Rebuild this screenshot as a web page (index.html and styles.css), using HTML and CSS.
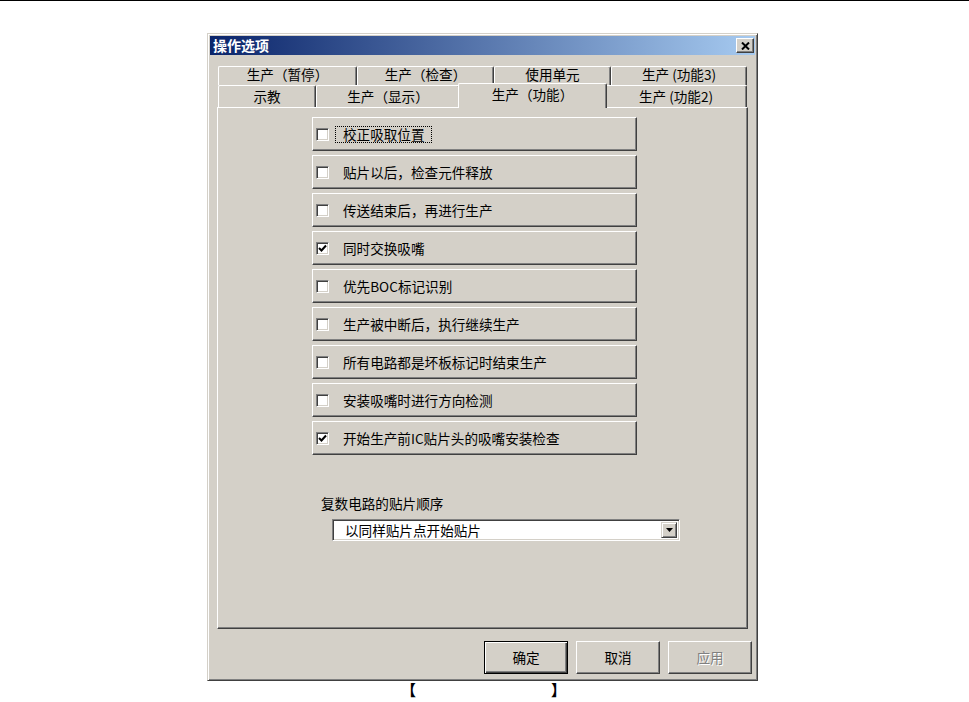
FILE: index.html
```html
<!DOCTYPE html>
<html>
<head>
    <meta charset="utf-8">
    <title>操作选项</title>
    <link rel="stylesheet" href="styles.css">
</head>
<body>
    <div class="top-rule"></div>

    <div class="dialog">
        <div class="titlebar">
            <span class="title">操作选项</span>
            <span class="close-btn">
                <svg width="9" height="8" viewBox="0 0 9 8"><path d="M1 0.5 L8 7.5 M8 0.5 L1 7.5" stroke="#000" stroke-width="2"/></svg>
            </span>
        </div>

        <div class="tabs">
            <div class="tab-row back">
                <div class="tab">生产（暂停）</div>
                <div class="tab">生产（检查）</div>
                <div class="tab">使用单元</div>
                <div class="tab">生产 (功能3)</div>
            </div>
            <div class="tab-row front">
                <div class="tab">示教</div>
                <div class="tab">生产（显示）</div>
                <div class="tab selected">生产（功能）</div>
                <div class="tab">生产 (功能2)</div>
            </div>
        </div>

        <div class="panel">
            <div class="options">
                <div class="option"><span class="check"></span><span class="opt-label focus">校正吸取位置</span></div>
                <div class="option"><span class="check"></span><span class="opt-label">贴片以后，检查元件释放</span></div>
                <div class="option"><span class="check"></span><span class="opt-label">传送结束后，再进行生产</span></div>
                <div class="option">
                    <span class="check"><svg width="9" height="9" viewBox="0 0 9 9"><path d="M1 4 L3.5 6.5 L8 1.5" stroke="#000" stroke-width="2" fill="none"/></svg></span>
                    <span class="opt-label">同时交换吸嘴</span>
                </div>
                <div class="option"><span class="check"></span><span class="opt-label">优先BOC标记识别</span></div>
                <div class="option"><span class="check"></span><span class="opt-label">生产被中断后，执行继续生产</span></div>
                <div class="option"><span class="check"></span><span class="opt-label">所有电路都是坏板标记时结束生产</span></div>
                <div class="option"><span class="check"></span><span class="opt-label">安装吸嘴时进行方向检测</span></div>
                <div class="option">
                    <span class="check"><svg width="9" height="9" viewBox="0 0 9 9"><path d="M1 4 L3.5 6.5 L8 1.5" stroke="#000" stroke-width="2" fill="none"/></svg></span>
                    <span class="opt-label">开始生产前IC贴片头的吸嘴安装检查</span>
                </div>
            </div>

            <div class="order">
                <div class="order-label">复数电路的贴片顺序</div>
                <div class="combo">
                    <span class="combo-text">以同样贴片点开始贴片</span>
                    <span class="combo-btn"><svg width="7" height="4" viewBox="0 0 7 4"><path d="M0 0 H7 L3.5 4 Z" fill="#000"/></svg></span>
                </div>
            </div>
        </div>

        <div class="buttons">
            <div class="btn default">确定</div>
            <div class="btn">取消</div>
            <div class="btn disabled">应用</div>
        </div>
    </div>

    <div class="caption"><span>【</span><span class="caption-gap"></span><span>】</span></div>
</body>
</html>
```

FILE: styles.css
```css
body { margin: 0; background: #fff; font-family: "Noto Sans CJK SC", "Liberation Sans", sans-serif; color: #000; }
.top-rule { height: 1px; background: #000; }

/* dialog frame */
.dialog { box-sizing: border-box; width: 551px; height: 648px; margin: 32px 0 0 207px; padding: 2px; background: #d4d0c8; border: 1px solid; border-color: #d4d0c8 #404040 #404040 #d4d0c8; box-shadow: inset 1px 1px #fff, inset -1px -1px #808080; display: flex; flex-direction: column; }
.titlebar { height: 19px; display: flex; align-items: center; justify-content: space-between; padding: 0 1px 0 3px; background: linear-gradient(to right, #0a246a, #a6caf0); }
.title { color: #fff; font-weight: bold; font-size: 14px; line-height: 19px; }
.close-btn { box-sizing: border-box; width: 18px; height: 15px; display: flex; align-items: center; justify-content: center; background: #d4d0c8; border: 1px solid; border-color: #fff #404040 #404040 #fff; box-shadow: inset -1px -1px #808080; }

/* tabs */
.tabs { margin: 11px 0 0 8px; width: 529px; }
.tab-row { display: grid; }
.tab-row.back { grid-template-columns: 139px 137px 117px 136px; height: 19px; }
.tab-row.front { grid-template-columns: 98px 144px 145px 142px; height: 22px; }
.tab { box-sizing: border-box; font-size: 13.6px; text-align: center; background: #d4d0c8; border-top: 1px solid #fff; border-left: 1px solid #fff; border-right: 1px solid #404040; box-shadow: inset -1px 0 #808080; border-radius: 2px 2px 0 0; }
.back .tab { line-height: 15px; }
.front .tab { line-height: 20px; }
.tab.selected { position: relative; z-index: 1; margin: -2px -2px -1px -2px; padding-top: 2px; line-height: 17px; padding-bottom: 5px; }

/* tab page */
.panel { box-sizing: border-box; height: 522px; margin: 0 7px 0 7px; padding: 9px 0 0 94px; border: 1px solid; border-color: #fff #404040 #404040 #fff; box-shadow: inset -1px -1px #808080; }
.options { width: 325px; display: flex; flex-direction: column; gap: 4px; }
.option { box-sizing: border-box; height: 34px; display: flex; align-items: center; padding-left: 3px; border: 1px solid; border-color: #fff #404040 #404040 #fff; box-shadow: inset -1px -1px #808080; font-size: 13.6px; }
.check { box-sizing: border-box; width: 13px; height: 13px; background: #fff; border: 1px solid; border-color: #808080 #fff #fff #808080; box-shadow: inset 1px 1px #404040, inset -1px -1px #d4d0c8; display: flex; align-items: center; justify-content: center; }
.opt-label { margin-left: 6px; padding: 0 6px 0 7px; line-height: 15px; border: 1px solid transparent; }
.opt-label.focus { border: 1px dotted #000; }

.order { margin-top: 40px; }
.order-label { margin-left: 9px; font-size: 13.6px; line-height: 16px; }
.combo { box-sizing: border-box; width: 348px; height: 22px; margin: 8px 0 0 20px; display: flex; align-items: center; justify-content: space-between; background: #fff; border: 1px solid; border-color: #808080 #fff #fff #808080; box-shadow: inset 1px 1px #404040, inset -1px -1px #d4d0c8; padding: 2px; }
.combo-text { font-size: 13.6px; padding-left: 10px; line-height: 16px; }
.combo-btn { box-sizing: border-box; width: 16px; height: 16px; display: flex; align-items: center; justify-content: center; background: #d4d0c8; border: 1px solid; border-color: #d4d0c8 #404040 #404040 #d4d0c8; box-shadow: inset 1px 1px #fff, inset -1px -1px #808080; }

/* bottom buttons */
.buttons { display: flex; justify-content: flex-end; gap: 8px; margin-top: 12px; padding-right: 3px; }
.btn { box-sizing: border-box; width: 84px; height: 33px; font-size: 13.6px; line-height: 31px; text-align: center; border: 1px solid; border-color: #fff #404040 #404040 #fff; box-shadow: inset -1px -1px #808080; }
.btn.default { border-color: #000; box-shadow: inset 1px 1px #fff, inset -1px -1px #404040, inset -2px -2px #808080; }
.btn.disabled { color: #808080; text-shadow: 1px 1px #fff; }

.caption { display: flex; margin: 1px 0 0 401px; font-size: 15px; font-weight: bold; line-height: 16px; }
.caption-gap { width: 135px; }
```
